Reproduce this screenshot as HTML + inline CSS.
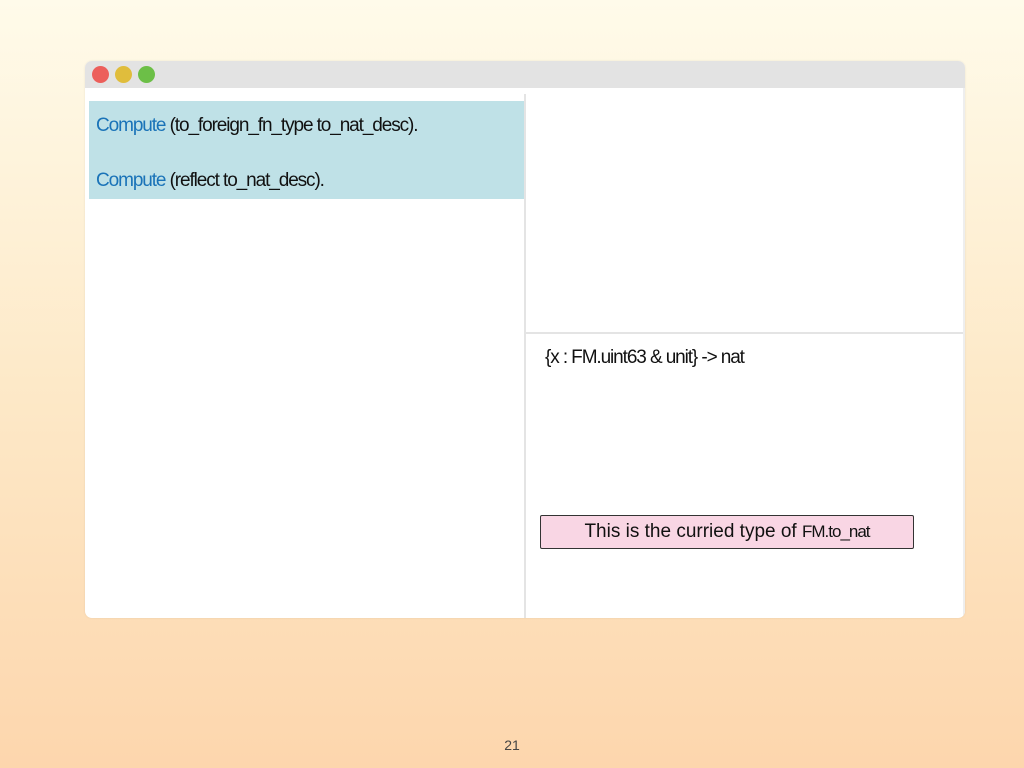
<!DOCTYPE html>
<html><head><meta charset="utf-8"><style>
*{margin:0;padding:0;box-sizing:border-box}
body{width:1024px;height:768px;overflow:hidden;background:linear-gradient(#fffbea 0%,#fde9c8 50%,#fdd6ad 100%);font-family:"Liberation Sans",sans-serif;position:relative}
.win{position:absolute;left:85px;top:61px;width:880px;height:557px;background:#fff;border-radius:7px;overflow:hidden;box-shadow:0 0 2px rgba(0,0,0,.08)}
.bar{position:absolute;left:0;top:0;width:880px;height:27px;background:#e3e3e3}
.dot{position:absolute;top:5px;width:17px;height:17px;border-radius:50%}
.code{font-size:19px;letter-spacing:-1.1px;color:#111;white-space:nowrap}
.kw{color:#1a73b8}
</style></head><body>
<div class="win">
<div class="bar"></div>
<div class="dot" style="left:7px;background:#ec5f5b"></div>
<div class="dot" style="left:30px;background:#e0bd3c"></div>
<div class="dot" style="left:53px;background:#6cbf47"></div>
<div style="position:absolute;left:4px;top:40px;width:435px;height:98px;background:#bfe1e7"></div>
<div class="code" style="position:absolute;left:11px;top:54px"><span class="kw">Compute</span> (to_foreign_fn_type to_nat_desc).</div>
<div class="code" style="position:absolute;left:11px;top:109px"><span class="kw">Compute</span> (reflect to_nat_desc).</div>
<div style="position:absolute;left:439px;top:33px;width:2px;height:524px;background:#e4e4e4"></div>
<div style="position:absolute;left:441px;top:271px;width:437px;height:2px;background:#e4e4e4"></div>
<div style="position:absolute;left:878px;top:27px;width:2px;height:530px;background:#eee"></div>
<div class="code" style="position:absolute;left:460px;top:286px">{x : FM.uint63 &amp; unit} -&gt; nat</div>
<div style="position:absolute;left:455px;top:454px;width:374px;height:34px;background:#f9d6e4;border:1px solid #333;border-radius:2px;text-align:center;font-size:19px;line-height:32px;color:#111">This is the curried type of <span style="font-size:17px;letter-spacing:-1px">FM.to_nat</span></div>
</div>
<div style="position:absolute;left:0;width:1024px;top:737px;text-align:center;font-size:14px;color:#444">21</div>
</body></html>
